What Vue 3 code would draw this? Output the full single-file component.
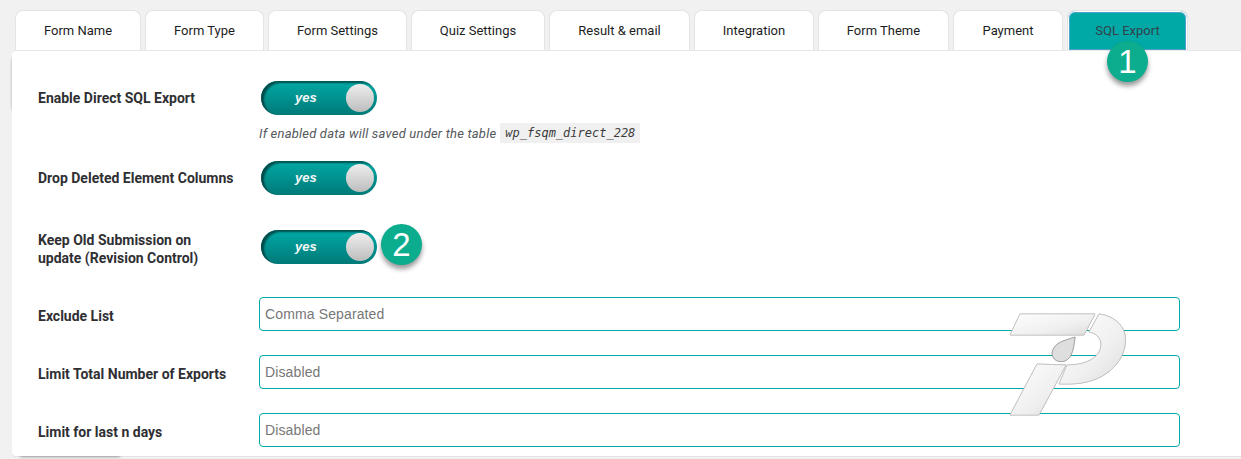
<script setup>
const tabs = [
  { name: 'Form Name', w: 126 },
  { name: 'Form Type', w: 119 },
  { name: 'Form Settings', w: 139 },
  { name: 'Quiz Settings', w: 134 },
  { name: 'Result & email', w: 141 },
  { name: 'Integration', w: 120 },
  { name: 'Form Theme', w: 131 },
  { name: 'Payment', w: 110 },
  { name: 'SQL Export', w: 121, active: true },
]
</script>

<template>
  <div class="page">
    <div class="tabs">
      <div
        v-for="t in tabs"
        :key="t.name"
        class="tab"
        :class="{ active: t.active }"
        :style="{ width: t.w + 'px' }"
      >{{ t.name }}</div>
    </div>
    <div class="panel">
      <div class="badge badge-one">1</div>

      <div class="row r1">
        <div class="label">Enable Direct SQL Export</div>
        <div class="toggle"><span class="yes">yes</span><span class="knob"></span></div>
      </div>
      <div class="help">
        <em>If enabled data will saved under the table</em>
        <code>wp_fsqm_direct_228</code>
      </div>

      <div class="row r2">
        <div class="label">Drop Deleted Element Columns</div>
        <div class="toggle"><span class="yes">yes</span><span class="knob"></span></div>
      </div>

      <div class="row r3">
        <div class="label">Keep Old Submission on<br />update (Revision Control)</div>
        <div class="toggle"><span class="yes">yes</span><span class="knob"></span></div>
        <div class="badge badge-two">2</div>
      </div>

      <div class="row r4">
        <div class="label">Exclude List</div>
        <input class="field" placeholder="Comma Separated" />
      </div>
      <div class="row r5">
        <div class="label">Limit Total Number of Exports</div>
        <input class="field" placeholder="Disabled" />
      </div>
      <div class="row r6">
        <div class="label">Limit for last n days</div>
        <input class="field" placeholder="Disabled" />
      </div>

      <svg class="logo" width="120" height="104" viewBox="0 0 120 104">
        <defs>
          <linearGradient id="metal" x1="0" y1="0" x2="1" y2="1">
            <stop offset="0" stop-color="#fdfdfd" />
            <stop offset="0.6" stop-color="#f0f0f0" />
            <stop offset="1" stop-color="#dcdcdc" />
          </linearGradient>
        </defs>
        <g fill="url(#metal)" stroke="#c4c4c4" stroke-width="0.7" stroke-linejoin="round">
          <path d="M11 1 L86 1 L75 22 L1 22 Z" />
          <path d="M28 51 L57 52 L30 102 L1 102 Z" />
          <path d="M90 1 C106 3 117 14 116.5 27 C116 50 95 71 60 71 L50 71 L58 52 C78 52 92 44 92 31 C92 25 87 20 80 19 Z" />
          <path d="M66 24 C65 33 64 40 60 45 C56 50 47 50 44 44 C41 38 46 31 54 28 Z" fill="#dedede" stroke="#9a9a9a" />
        </g>
      </svg>
    </div>
  </div>
</template>

<style>
html, body { margin: 0; background: #f1f1f1; }
</style>

<style scoped>
.page {
  position: relative;
  z-index: 0;
  width: 1241px;
  height: 459px;
  overflow: hidden;
  box-sizing: border-box;
  background: #f1f1f1;
  padding: 10px 0 0 12px;
  font-family: Roboto, "Liberation Sans", sans-serif;
}
.tabs {
  display: flex;
  gap: 4px;
  padding-left: 3px;
  height: 40px;
}
.tab {
  box-sizing: border-box;
  height: 41px;
  background: #fff;
  border: 1px solid #e4e4e4;
  border-bottom: 0;
  border-radius: 8px 8px 0 0;
  text-align: center;
  font-size: 13px;
  line-height: 40px;
  color: #1d1d1d;
}
.tab.active {
  background: #00a9a5;
  color: #33414a;
  box-shadow: inset 0 0 0 1px #fff, inset 0 0 0 2px #4aa3c9;
}
.panel {
  position: relative;
  box-sizing: border-box;
  width: 1229px;
  height: 406px;
  background: #fff;
  border-top: 1px solid #e8e8e8;
  border-radius: 4px 0 0 4px;
  box-shadow: 0 1px 1px rgba(0, 0, 0, 0.06);
}
.panel::before {
  content: "";
  position: absolute;
  z-index: -1;
  left: 8px;
  bottom: 1px;
  width: 100px;
  height: 3px;
  box-shadow: 0 2px 3px rgba(0, 0, 0, 0.35);
}
.panel::after {
  content: "";
  position: absolute;
  z-index: -1;
  left: 1px;
  top: 8px;
  width: 3px;
  height: 50px;
  box-shadow: -1px 0 3px rgba(0, 0, 0, 0.3);
}
.row {
  display: flex;
  align-items: center;
  padding-left: 26px;
}
.label {
  box-sizing: border-box;
  width: 221px;
  flex: none;
  font-size: 14px;
  font-weight: 700;
  line-height: 18px;
  color: #2f2f33;
}
.toggle {
  position: relative;
  box-sizing: border-box;
  margin-left: 2px;
  width: 116px;
  height: 34px;
  flex: none;
  border-radius: 17px;
  background: linear-gradient(#00a9a5, #007a78);
  box-shadow: inset 3px 2px 2px rgba(0, 50, 50, 0.75);
}
.yes {
  position: absolute;
  left: 34px;
  top: 8px;
  font-family: "Liberation Sans", Arial, sans-serif;
  font-size: 13px;
  line-height: 17px;
  font-style: italic;
  font-weight: 700;
  color: #f2f7f7;
}
.knob {
  position: absolute;
  right: 3px;
  top: 3px;
  width: 28px;
  height: 28px;
  border-radius: 50%;
  background: linear-gradient(#eeeeee, #bdbdbd);
}
.r1 { height: 34px; margin-top: 30px; }
.help {
  display: flex;
  align-items: center;
  gap: 4px;
  margin-top: 7px;
  padding-left: 247px;
  height: 22px;
  font-size: 13px;
  color: #55585c;
}
.help em { letter-spacing: 0.2px; }
.help code {
  font-family: "DejaVu Sans Mono", "Liberation Mono", monospace;
  font-style: italic;
  font-size: 12px;
  color: #3a3a3a;
  background: #f0f0f0;
  padding: 3px 5px;
  line-height: 14px;
}
.r2 { height: 34px; margin-top: 17px; }
.r3 { height: 36px; margin-top: 34px; position: relative; }
.r3 .label { padding-top: 4px; }
.r4 { height: 34px; margin-top: 32px; }
.r5 { height: 34px; margin-top: 24px; }
.r6 { height: 34px; margin-top: 24px; }
.r4 .label, .r5 .label, .r6 .label { padding-top: 3px; }
.field {
  box-sizing: border-box;
  width: 921px;
  height: 34px;
  flex: none;
  padding: 0 5px;
  border: 1px solid #00a9a5;
  border-radius: 4px;
  outline: 0;
  background: transparent;
  font-family: "Liberation Sans", Arial, sans-serif;
  font-size: 14px;
  letter-spacing: 0.13px;
}
.field::placeholder { color: #777; opacity: 1; }
.badge {
  position: absolute;
  width: 41px;
  height: 41px;
  border-radius: 50%;
  background: #0cac8e;
  color: #fff;
  font-family: "Liberation Sans", Arial, sans-serif;
  font-size: 33px;
  line-height: 41px;
  text-align: center;
  box-shadow: 0 4px 5px rgba(0, 0, 0, 0.4);
}
.badge-one { left: 1095px; top: -10px; }
.badge-two { left: 369px; top: -5px; }
.logo {
  position: absolute;
  left: 997px;
  top: 262px;
  filter: drop-shadow(0.8px 0.8px 0 #9a9a9a);
}
</style>
